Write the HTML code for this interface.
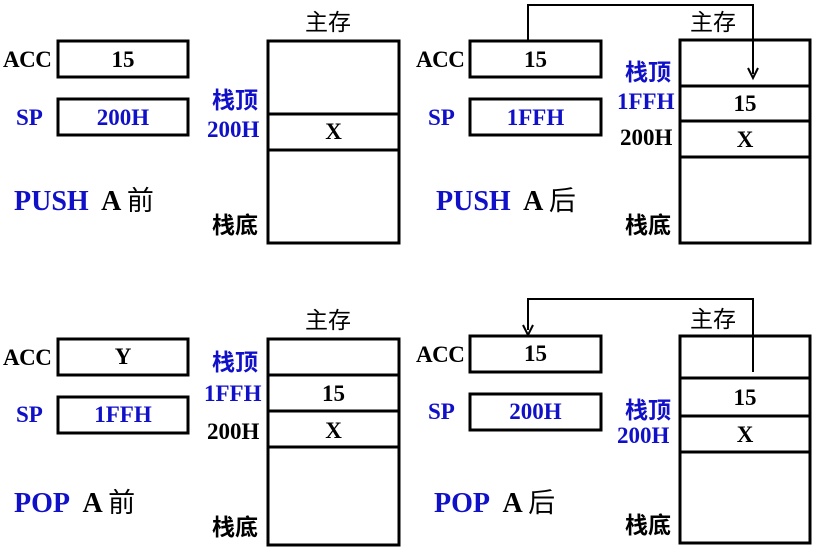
<!DOCTYPE html>
<html><head><meta charset="utf-8"><style>
body{margin:0;width:826px;height:549px;background:#fff;position:relative;overflow:hidden}
.t{position:absolute;font-family:"Liberation Serif","Noto Serif CJK SC",serif;font-weight:bold;font-size:23px;line-height:24px;white-space:nowrap;color:#000}
.c{font-family:"Liberation Sans","Noto Sans CJK SC",sans-serif;font-size:23px;font-weight:bold}
.b{color:#1010c8}
.big{font-size:28px;line-height:30px}
.ctr{text-align:center}
svg{position:absolute;left:0;top:0}
</style></head><body>
<svg width="826" height="549" fill="none" stroke="#000" stroke-width="3">
<rect x="58" y="41" width="130" height="36"/><rect x="58" y="99" width="130" height="36"/>
<rect x="268" y="41" width="131" height="202"/><line x1="268" y1="114" x2="399" y2="114"/><line x1="268" y1="150" x2="399" y2="150"/>
<rect x="470" y="41" width="131" height="36"/><rect x="470" y="99" width="131" height="36"/>
<rect x="680" y="40" width="130" height="203"/><line x1="680" y1="86" x2="810" y2="86"/><line x1="680" y1="121" x2="810" y2="121"/><line x1="680" y1="157" x2="810" y2="157"/>
<polyline stroke-width="2" points="528,41 528,5 753,5 753,74"/><path d="M748,68 L753,78 L758,68" stroke-width="2"/>
<rect x="58" y="339" width="130" height="36"/><rect x="58" y="397" width="130" height="36"/>
<rect x="268" y="339" width="131" height="206"/><line x1="268" y1="375" x2="399" y2="375"/><line x1="268" y1="411" x2="399" y2="411"/><line x1="268" y1="447" x2="399" y2="447"/>
<rect x="470" y="336" width="131" height="36"/><rect x="470" y="394" width="131" height="36"/>
<rect x="680" y="336" width="130" height="207"/><line x1="680" y1="378" x2="810" y2="378"/><line x1="680" y1="416" x2="810" y2="416"/><line x1="680" y1="452" x2="810" y2="452"/>
<polyline stroke-width="2" points="753,372 753,299 528,299 528,330"/><path d="M523,325 L528,335 L533,325" stroke-width="2"/>
</svg>
<!-- Q1 -->
<div class="t" style="left:3px;top:48px;letter-spacing:-0.5px">ACC</div>
<div class="t ctr" style="left:58px;width:130px;top:48px">15</div>
<div class="t b" style="left:16px;top:106px">SP</div>
<div class="t b ctr" style="left:58px;width:130px;top:106px">200H</div>
<div class="t c" style="left:305px;top:10px;font-weight:normal">主存</div>
<div class="t c b" style="left:212px;top:88px">栈顶</div>
<div class="t b" style="left:207px;top:118px">200H</div>
<div class="t ctr" style="left:268px;width:131px;top:120px">X</div>
<div class="t c" style="left:212px;top:213px">栈底</div>
<div class="t big" style="left:14px;top:186px"><span class="b">PUSH</span>&nbsp; A <span class="c" style="font-size:27px;font-weight:normal">前</span></div>
<!-- Q2 -->
<div class="t" style="left:416px;top:48px;letter-spacing:-0.5px">ACC</div>
<div class="t ctr" style="left:470px;width:131px;top:48px">15</div>
<div class="t b" style="left:428px;top:106px">SP</div>
<div class="t b ctr" style="left:470px;width:131px;top:106px">1FFH</div>
<div class="t c" style="left:690px;top:10px;font-weight:normal">主存</div>
<div class="t c b" style="left:625px;top:60px">栈顶</div>
<div class="t b" style="left:617px;top:90px">1FFH</div>
<div class="t" style="left:620px;top:126px">200H</div>
<div class="t ctr" style="left:680px;width:130px;top:92px">15</div>
<div class="t ctr" style="left:680px;width:130px;top:128px">X</div>
<div class="t c" style="left:625px;top:213px">栈底</div>
<div class="t big" style="left:436px;top:186px"><span class="b">PUSH</span>&nbsp; A <span class="c" style="font-size:27px;font-weight:normal">后</span></div>
<!-- Q3 -->
<div class="t" style="left:3px;top:346px;letter-spacing:-0.5px">ACC</div>
<div class="t ctr" style="left:58px;width:130px;top:345px">Y</div>
<div class="t b" style="left:16px;top:403px">SP</div>
<div class="t b ctr" style="left:58px;width:130px;top:403px">1FFH</div>
<div class="t c" style="left:305px;top:308px;font-weight:normal">主存</div>
<div class="t c b" style="left:212px;top:350px">栈顶</div>
<div class="t b" style="left:204px;top:382px">1FFH</div>
<div class="t" style="left:207px;top:420px">200H</div>
<div class="t ctr" style="left:268px;width:131px;top:382px">15</div>
<div class="t ctr" style="left:268px;width:131px;top:419px">X</div>
<div class="t c" style="left:212px;top:515px">栈底</div>
<div class="t big" style="left:14px;top:488px"><span class="b">POP</span>&nbsp; A <span class="c" style="font-size:27px;font-weight:normal">前</span></div>
<!-- Q4 -->
<div class="t" style="left:416px;top:343px;letter-spacing:-0.5px">ACC</div>
<div class="t ctr" style="left:470px;width:131px;top:342px">15</div>
<div class="t b" style="left:428px;top:400px">SP</div>
<div class="t b ctr" style="left:470px;width:131px;top:400px">200H</div>
<div class="t c" style="left:690px;top:307px;font-weight:normal">主存</div>
<div class="t ctr" style="left:680px;width:130px;top:386px">15</div>
<div class="t c b" style="left:625px;top:398px">栈顶</div>
<div class="t b" style="left:617px;top:424px">200H</div>
<div class="t ctr" style="left:680px;width:130px;top:423px">X</div>
<div class="t c" style="left:625px;top:513px">栈底</div>
<div class="t big" style="left:434px;top:488px"><span class="b">POP</span>&nbsp; A <span class="c" style="font-size:27px;font-weight:normal">后</span></div>
</body></html>
